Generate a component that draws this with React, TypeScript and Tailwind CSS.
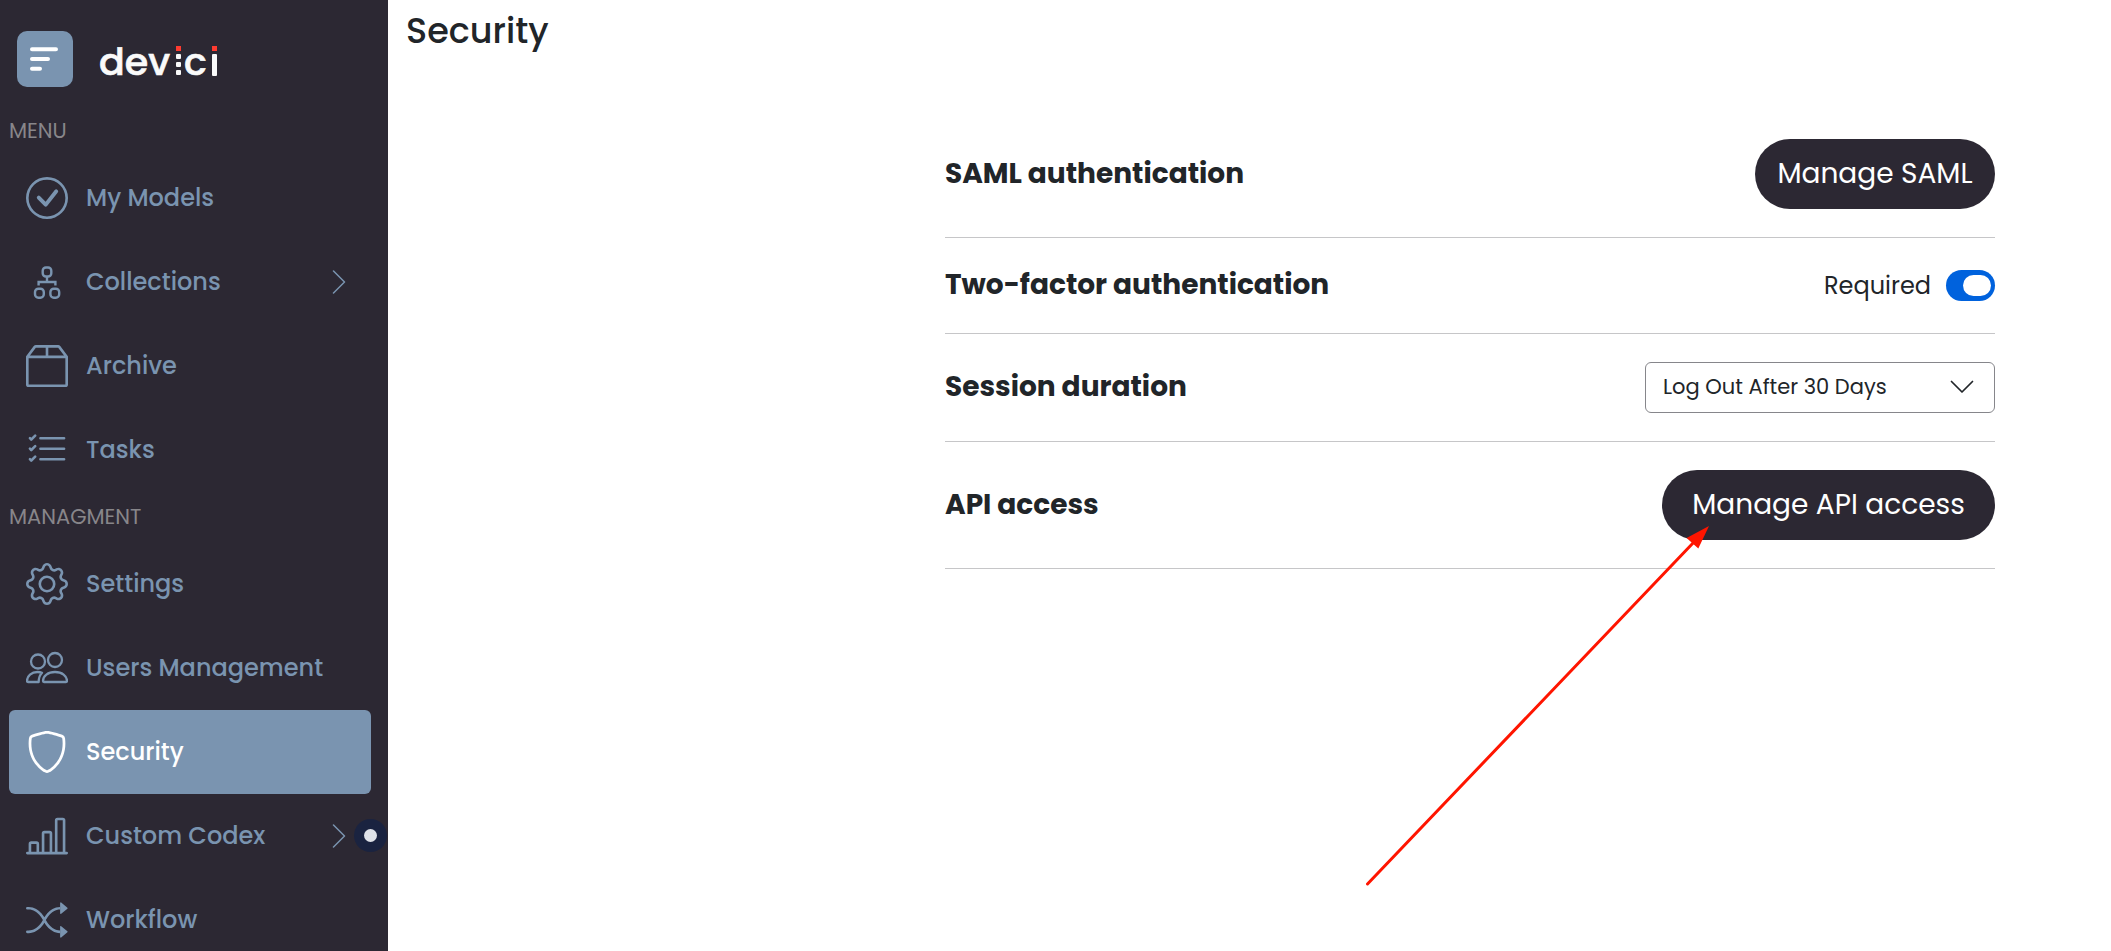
import type { ComponentType, ReactNode } from "react";
import {
  BsBarChartLine,
  BsBox2,
  BsCheckCircle,
  BsGear,
  BsListCheck,
  BsShield,
  BsShuffle,
} from "react-icons/bs";

type IconProps = { className?: string };

function CollectionsIcon({ className }: IconProps) {
  return (
    <svg viewBox="0 0 42 42" fill="none" stroke="currentColor" strokeWidth="2.4" className={className} aria-hidden="true">
      <rect x="16.700" y="6.500" width="8.600" height="9" rx="3.200" />
      <path d="M21 15.500v5M12.600 24.500v-3.500h16.800v3.500" />
      <rect x="9" y="27.700" width="8.800" height="9" rx="3.400" />
      <rect x="24.400" y="27.700" width="8.800" height="9" rx="3.400" />
    </svg>
  );
}

function UsersIcon({ className }: IconProps) {
  return (
    <svg viewBox="0 0 42 42" fill="none" stroke="currentColor" strokeWidth="2.3" strokeLinejoin="round" className={className} aria-hidden="true">
      <circle cx="12" cy="14.500" r="7" />
      <circle cx="29" cy="13" r="7" />
      <path d="M17 34C17 29 22 25 29 25s12 4 12 9c0 .6-.4 1-1 1H18c-.6 0-1-.4-1-1Z" />
      <path d="M12.700 35H2c-.6 0-1-.4-1-1C1 29 5.500 25 11.500 25c1.700 0 3 .1 4.500.7-2.400 2.500-3.400 5-3.300 9.300Z" />
    </svg>
  );
}

function ChevronRight({ className }: IconProps) {
  return (
    <svg viewBox="0 0 14 24" fill="none" stroke="currentColor" strokeWidth="1.500" strokeLinecap="round" strokeLinejoin="round" className={className} aria-hidden="true">
      <path d="M1.500 1 12.500 12 1.500 23" />
    </svg>
  );
}

function Logo() {
  return (
    <svg viewBox="0 0 122 60" className="h-[60px] w-[122px]" role="img" aria-label="devici">
      <g fill="#fafafa" stroke="#fafafa" strokeWidth="0.6" fontFamily="Poppins, Lato, sans-serif" fontSize="38" fontWeight="500">
        <text x="0" y="44">dev</text>
        <text x="85" y="44">c</text>
      </g>
      <g fill="#fafafa">
        <rect x="77" y="23" width="5" height="5" rx="1" />
        <rect x="77" y="31" width="5" height="5" rx="1" />
        <rect x="77" y="39" width="5" height="5" rx="1" />
        <rect x="113" y="23" width="5" height="22" rx="1" />
      </g>
      <g fill="#ff3b30">
        <rect x="77" y="15" width="5" height="5" />
        <rect x="113" y="15" width="5" height="5" />
      </g>
    </svg>
  );
}

type NavEntry = {
  label: string;
  icon: ComponentType<IconProps>;
  expandable?: boolean;
  active?: boolean;
  beacon?: boolean;
};

const menu: NavEntry[] = [
  { label: "My Models", icon: BsCheckCircle },
  { label: "Collections", icon: CollectionsIcon, expandable: true },
  { label: "Archive", icon: BsBox2 },
  { label: "Tasks", icon: BsListCheck },
];

const management: NavEntry[] = [
  { label: "Settings", icon: BsGear },
  { label: "Users Management", icon: UsersIcon },
  { label: "Security", icon: BsShield, active: true },
  { label: "Custom Codex", icon: BsBarChartLine, expandable: true, beacon: true },
  { label: "Workflow", icon: BsShuffle },
];

function NavItem({ entry }: { entry: NavEntry }) {
  const Icon = entry.icon;
  return (
    <li className="relative">
      <a
        href="#"
        aria-current={entry.active ? "page" : undefined}
        className={
          entry.active
            ? "flex h-21 items-center rounded-md bg-[#7a94b0] pl-[17px] pr-[25px] text-white"
            : "flex h-21 items-center rounded-md pl-[17px] pr-[25px] text-[#7a94b0]"
        }
      >
        <Icon className="size-[42px] shrink-0" />
        <span className="ml-[18px] grow whitespace-nowrap text-2xl font-medium leading-9">{entry.label}</span>
        {entry.expandable && <ChevronRight className="h-6 w-3.5 shrink-0" />}
      </a>
      {entry.beacon && (
        <span className="absolute -right-4 top-[25px] flex size-[33px] items-center justify-center rounded-full bg-[#1a2340]">
          <span className="size-[13px] rounded-full bg-[#dfe2e8]" />
        </span>
      )}
    </li>
  );
}

function NavSection({ title, entries }: { title: string; entries: NavEntry[] }) {
  return (
    <section>
      <h2 className="flex h-[50px] items-center pl-[9px] text-[21px] text-[#88868a]">{title}</h2>
      <ul className="pl-[9px] pr-[17px]">
        {entries.map((entry) => (
          <NavItem key={entry.label} entry={entry} />
        ))}
      </ul>
    </section>
  );
}

function SettingRow({ title, children }: { title: ReactNode; children: ReactNode }) {
  return (
    <div className="flex items-center justify-between border-b border-[#c6c6c8] py-7">
      <h2 className="pb-0.5 text-[28px] font-bold leading-[37px]">{title}</h2>
      {children}
    </div>
  );
}

export default function App() {
  return (
    <div className="flex h-screen overflow-hidden bg-white font-['Poppins','Inter',sans-serif] text-[#212529]">
      <aside className="w-[388px] shrink-0 overflow-hidden bg-[#2c2833]">
        <div className="flex h-[106px] items-start gap-[26px] pl-[17px] pt-[31px]">
          <button type="button" aria-label="Toggle menu" className="flex size-14 items-center justify-center rounded-[10px] bg-[#7a94b0]">
            <svg viewBox="0 0 56 56" fill="none" stroke="#fff" strokeWidth="4" strokeLinecap="round" className="size-14" aria-hidden="true">
              <path d="M15 18.300h24M15 28h16M15 37.700h8" />
            </svg>
          </button>
          <a href="#">
            <Logo />
          </a>
        </div>
        <nav>
          <NavSection title="MENU" entries={menu} />
          <NavSection title="MANAGMENT" entries={management} />
        </nav>
      </aside>

      <main className="min-w-0 grow">
        <h1 className="flex h-[111px] items-start pl-[18px] pt-2 text-[35px] font-medium leading-[46px]">Security</h1>
        <div className="ml-auto mr-[116px] max-w-[1050px]">
          <SettingRow title="SAML authentication">
            <button type="button" className="h-[70px] w-60 whitespace-nowrap rounded-full bg-[#2c2833] text-[28px] text-white">
              Manage SAML
            </button>
          </SettingRow>
          <SettingRow title="Two-factor authentication">
            <label className="flex items-center gap-[15px] text-2xl leading-[39px]">
              Required
              <span className="relative inline-flex">
                <input
                  type="checkbox"
                  role="switch"
                  defaultChecked
                  className="peer h-[31px] w-[49px] appearance-none rounded-full bg-gray-300 checked:bg-[#0062dd]"
                />
                <span className="pointer-events-none absolute left-1 top-[5px] h-[21px] w-7 rounded-full bg-white peer-checked:left-[17px]" />
              </span>
            </label>
          </SettingRow>
          <SettingRow title={<label htmlFor="session-duration">Session duration</label>}>
            <div className="relative w-[350px]">
              <select
                id="session-duration"
                className="block h-[51px] w-full appearance-none rounded-md border border-[#86868b] bg-white pb-0.5 pl-[17px] pr-14 text-[21px]"
              >
                <option>Log Out After 30 Days</option>
              </select>
              <svg
                viewBox="0 0 24 14"
                fill="none"
                stroke="currentColor"
                strokeWidth="1.700"
                strokeLinecap="round"
                strokeLinejoin="round"
                className="pointer-events-none absolute right-[21px] top-[18px] h-3.5 w-6"
                aria-hidden="true"
              >
                <path d="M1.500 1.500 12 12 22.500 1.500" />
              </svg>
            </div>
          </SettingRow>
          <SettingRow title="API access">
            <div className="relative">
              <button type="button" className="block h-[70px] w-[333px] whitespace-nowrap rounded-full bg-[#2c2833] text-[28px] text-white">
                Manage API access
              </button>
              <svg viewBox="0 0 352 370" className="pointer-events-none absolute -left-[302px] top-[50px] h-[370px] w-[352px]" aria-hidden="true">
                <path d="M7.500 364 334 22" stroke="#ff1500" strokeWidth="3" strokeLinecap="round" />
                <path d="M349 6 338.300 28.500 326.600 18Z" fill="#ff1500" />
              </svg>
            </div>
          </SettingRow>
        </div>
      </main>
    </div>
  );
}
